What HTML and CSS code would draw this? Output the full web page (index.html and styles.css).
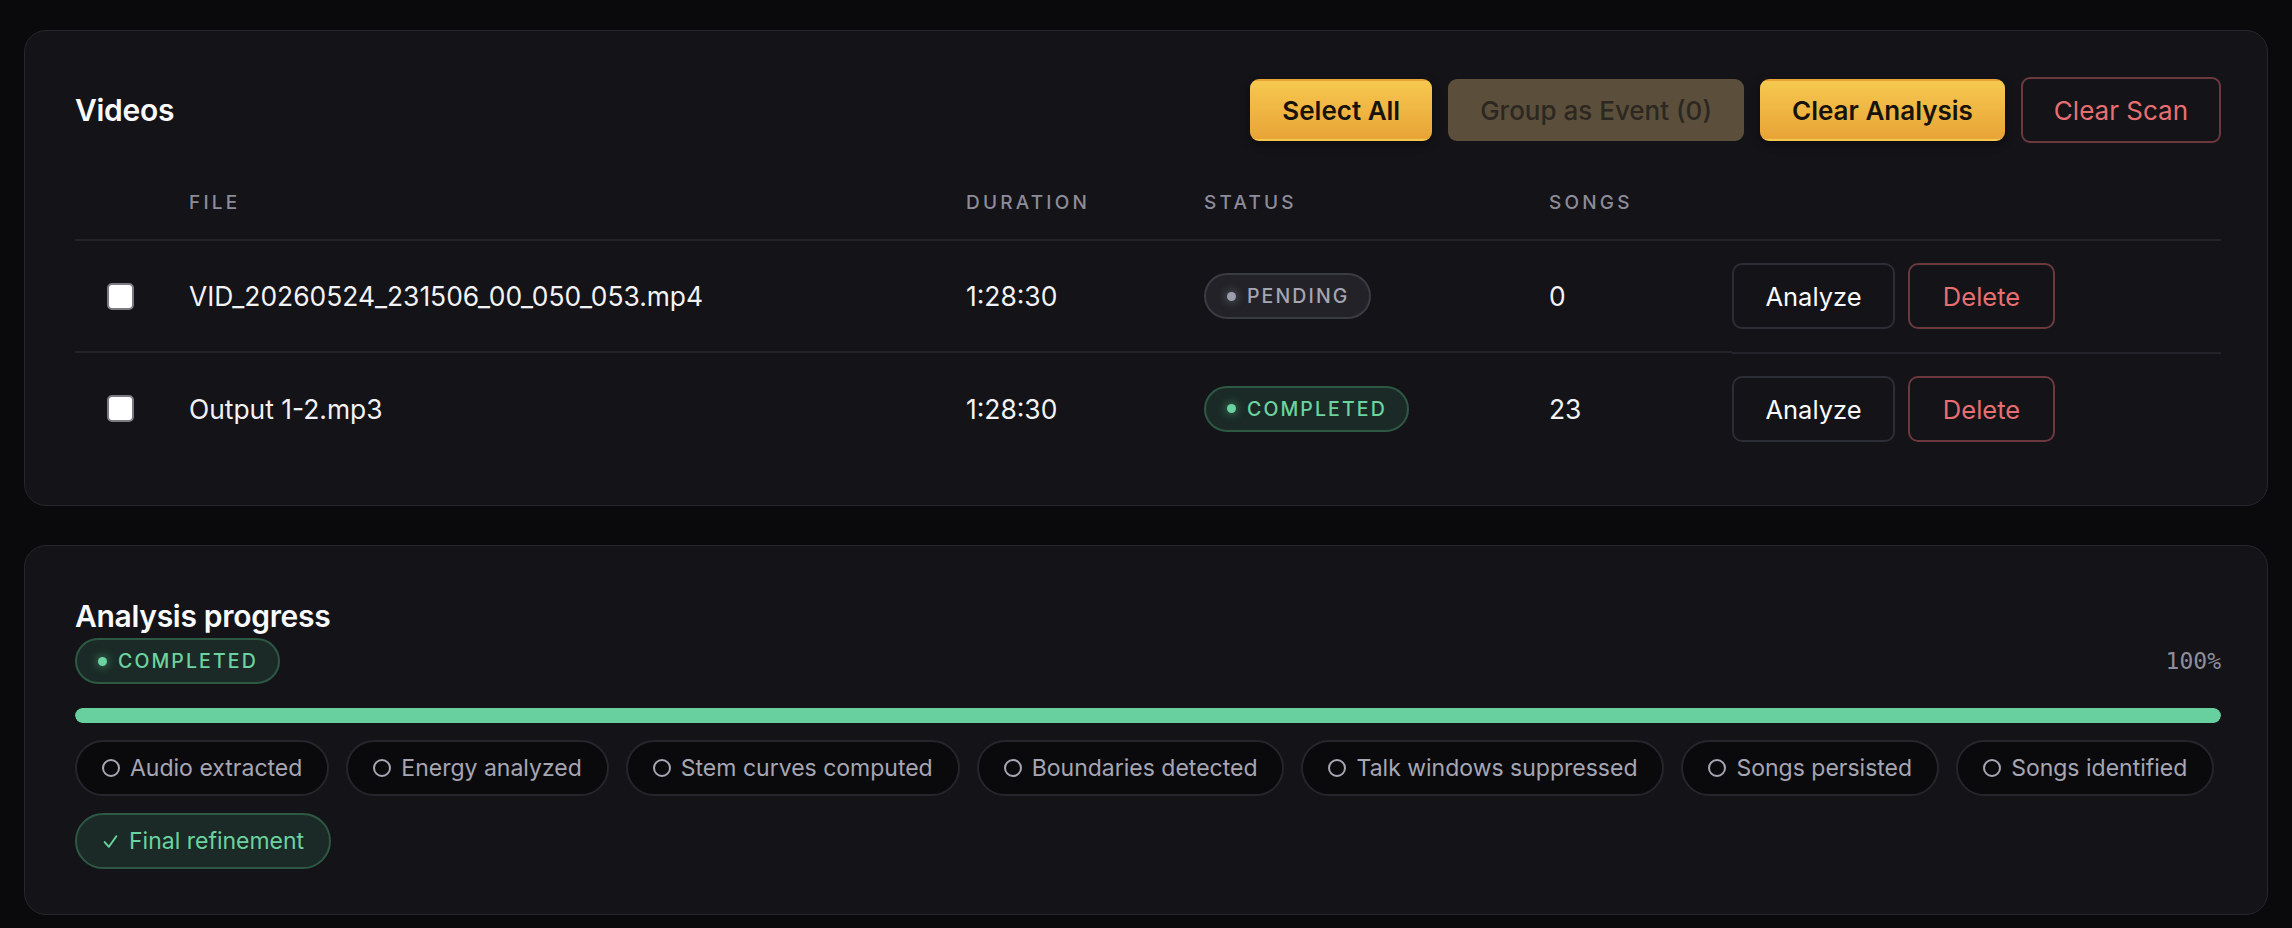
FILE: index.html
```html
<!DOCTYPE html>
<html lang="en">
  <head>
    <meta charset="UTF-8" />
    <meta name="viewport" content="width=device-width, initial-scale=1.0" />
    <title>Videos</title>
    <link rel="stylesheet" href="styles.css">
  </head>
  <body>
    <div class="page">
      <!-- Videos list -->
      <section class="card videos">
        <div class="card-head">
          <h2>Videos</h2>
          <div class="toolbar">
            <button class="btn btn-gold">Select All</button>
            <button class="btn btn-muted" disabled>Group as Event (0)</button>
            <button class="btn btn-gold">Clear Analysis</button>
            <button class="btn btn-danger">Clear Scan</button>
          </div>
        </div>

        <table class="video-table">
          <colgroup>
            <col class="c-check" />
            <col class="c-file" />
            <col class="c-duration" />
            <col class="c-status" />
            <col class="c-songs" />
            <col class="c-actions" />
          </colgroup>
          <thead>
            <tr>
              <th></th>
              <th>File</th>
              <th>Duration</th>
              <th>Status</th>
              <th>Songs</th>
              <th></th>
            </tr>
          </thead>
          <tbody>
            <tr>
              <td class="check"><input type="checkbox" /></td>
              <td>VID_20260524_231506_00_050_053.mp4</td>
              <td>1:28:30</td>
              <td><span class="pill pill-pending"><i class="dot"></i>Pending</span></td>
              <td>0</td>
              <td class="actions">
                <button class="btn btn-outline">Analyze</button>
                <button class="btn btn-danger btn-row">Delete</button>
              </td>
            </tr>
            <tr>
              <td class="check"><input type="checkbox" /></td>
              <td>Output 1-2.mp3</td>
              <td>1:28:30</td>
              <td><span class="pill pill-done"><i class="dot"></i>Completed</span></td>
              <td>23</td>
              <td class="actions">
                <button class="btn btn-outline">Analyze</button>
                <button class="btn btn-danger btn-row">Delete</button>
              </td>
            </tr>
          </tbody>
        </table>
      </section>

      <!-- Analysis progress -->
      <section class="card progress">
        <h2>Analysis progress</h2>
        <div class="progress-meta">
          <span class="pill pill-done"><i class="dot"></i>Completed</span>
          <span class="percent">100%</span>
        </div>
        <div class="bar"><div class="bar-fill" style="width: 100%"></div></div>
        <ul class="steps">
          <li class="step"><i class="ring"></i>Audio extracted</li>
          <li class="step"><i class="ring"></i>Energy analyzed</li>
          <li class="step"><i class="ring"></i>Stem curves computed</li>
          <li class="step"><i class="ring"></i>Boundaries detected</li>
          <li class="step"><i class="ring"></i>Talk windows suppressed</li>
          <li class="step"><i class="ring"></i>Songs persisted</li>
          <li class="step"><i class="ring"></i>Songs identified</li>
          <li class="step step-done">
            <svg class="tick" viewBox="0 0 16 16" width="17" height="17">
              <polyline points="2.5,8.5 6.5,13 13.5,3" fill="none" stroke="currentColor" stroke-width="1.8" stroke-linecap="round" stroke-linejoin="round" />
            </svg>Final refinement
          </li>
        </ul>
      </section>
    </div>
  </body>
</html>
```

FILE: styles.css
```css
body {
  margin: 0;
  background-color: #0a0a0c;
  color: #f2f2f5;
  font-family: "Inter", "Noto Sans", sans-serif;
}

.page {
  padding: 30px 24px;
  display: flex;
  flex-direction: column;
  gap: 39px;
}

.card {
  background-color: #131318;
  border: 1px solid #26262d;
  border-radius: 22px;
  padding: 46px 46px 41px 50px;
}

h2 {
  margin: 0;
  font-size: 30px;
  font-weight: 600;
  letter-spacing: -0.3px;
  color: #fafafc;
}

.card-head {
  display: flex;
  justify-content: space-between;
  align-items: center;
}

.toolbar {
  display: flex;
  align-items: center;
  gap: 16px;
}

.btn {
  font-family: inherit;
  font-size: 26px;
  font-weight: 500;
  border-radius: 9px;
  border: 2px solid transparent;
  background: none;
  cursor: pointer;
}

.toolbar .btn {
  height: 62px;
  padding: 0 30px;
}

.btn-gold {
  background: linear-gradient(#f6c84f, #e8a436);
  color: #17130c;
  font-weight: 600;
  box-shadow: 0 3px 8px rgba(0, 0, 0, 0.35);
}

.btn-muted {
  background-color: #5b4f3c;
  color: #2c2720;
}

.toolbar .btn-danger {
  height: 66px;
  padding: 0 31px;
}

.btn-danger {
  border-color: #6c3a3e;
  color: #e86f70;
  font-weight: 400;
}

.btn-outline {
  border-color: #2d2d35;
  color: #fafafc;
  font-weight: 400;
}

/* table */
.video-table {
  width: 100%;
  margin-top: 24px;
  border-collapse: collapse;
  table-layout: fixed;
}

.c-check { width: 114px; }
.c-file { width: 777px; }
.c-duration { width: 238px; }
.c-status { width: 345px; }
.c-songs { width: 183px; }

th {
  text-align: left;
  font-size: 19px;
  font-weight: 500;
  letter-spacing: 3.2px;
  text-transform: uppercase;
  color: #8d8c98;
  padding: 24px 0;
  line-height: 24px;
  border-bottom: 2px solid #232329;
}

td {
  height: 110px;
  padding: 0;
  font-size: 26.4px;
  color: #f2f2f5;
  vertical-align: middle;
}

tbody tr + tr td {
  border-top: 2px solid #232329;
}

.check {
  padding-left: 32px;
}

.check input {
  appearance: none;
  display: block;
  margin: 0;
  width: 27px;
  height: 27px;
  background-color: #fff;
  border: 2px solid #7a7a80;
  border-radius: 5px;
}

.actions {
  display: flex;
  align-items: center;
  gap: 13px;
  height: 110px;
}

.actions .btn {
  height: 66px;
  font-size: 25.5px;
  border-radius: 10px;
}

.actions .btn-outline {
  width: 163px;
}

.actions .btn-row {
  width: 147px;
}

/* status pills */
.pill {
  display: inline-flex;
  align-items: center;
  gap: 11px;
  height: 46px;
  box-sizing: border-box;
  padding: 0 20px 0 21px;
  border-radius: 23px;
  border: 2px solid;
  font-size: 19.5px;
  font-weight: 500;
  letter-spacing: 2.1px;
  text-transform: uppercase;
}

.dot {
  width: 9px;
  height: 9px;
  border-radius: 50%;
  background-color: currentColor;
}

.pill-pending {
  background-color: #222228;
  border-color: #3b3b43;
  color: #a6a5b4;
}

.pill-pending .dot {
  background-color: #9e9dab;
  box-shadow: 0 0 8px 2px rgba(158, 157, 171, 0.35);
}

.pill-done {
  background-color: #1b2a26;
  border-color: #2d5843;
  color: #6bd3a0;
}

.pill-done .dot {
  box-shadow: 0 0 8px 2px rgba(107, 211, 160, 0.35);
}

/* progress card */
.progress {
  padding-bottom: 45px;
}

.progress h2 {
  margin-top: 6px;
}

.progress-meta {
  display: flex;
  justify-content: space-between;
  align-items: center;
  margin-top: 4px;
}

.percent {
  font-family: "DejaVu Sans Mono", monospace;
  font-size: 23px;
  color: #8f8e9a;
}

.bar {
  margin-top: 24px;
  height: 15px;
  border-radius: 8px;
  background-color: #23232a;
  overflow: hidden;
}

.bar-fill {
  height: 100%;
  border-radius: 8px;
  background-color: #68d09f;
}

.steps {
  list-style: none;
  margin: 17px 0 0;
  padding: 0;
  display: flex;
  flex-wrap: wrap;
  gap: 17px;
}

.step {
  display: flex;
  align-items: center;
  gap: 10px;
  height: 56px;
  box-sizing: border-box;
  padding: 0 25px;
  border-radius: 28px;
  border: 2px solid #25252c;
  background-color: #0a0a0d;
  color: #a7a6b3;
  font-size: 23px;
}

.ring {
  width: 14px;
  height: 14px;
  border: 2px solid currentColor;
  border-radius: 50%;
}

.step-done {
  background-color: #1b2a26;
  border-color: #2d5843;
  color: #6bd3a0;
}
```
